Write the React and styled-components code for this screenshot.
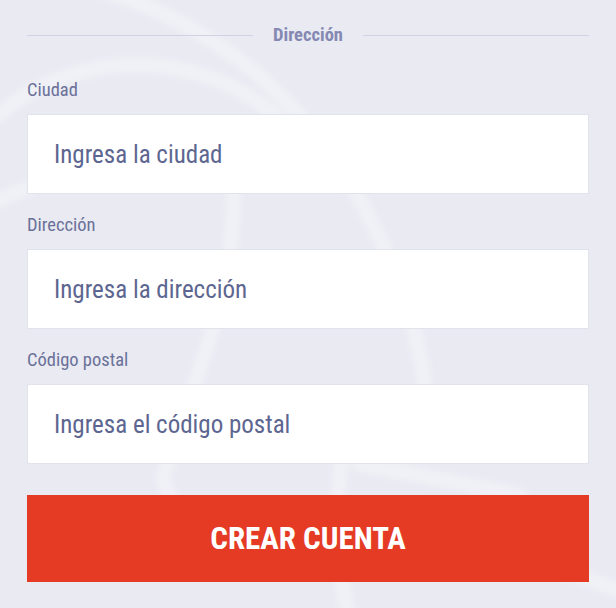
import React from 'react'
import styled, { createGlobalStyle } from 'styled-components'

const GlobalStyle = createGlobalStyle`
  html, body {
    margin: 0;
    padding: 0;
    background: #e9eaf2;
  }
  * { box-sizing: border-box; }
`;

const fields = [
  { label: 'Ciudad', placeholder: 'Ingresa la ciudad' },
  { label: 'Dirección', placeholder: 'Ingresa la dirección' },
  { label: 'Código postal', placeholder: 'Ingresa el código postal' },
];

// trazos suaves del fondo
const Backdrop = () => (
  <StBackdrop viewBox="0 0 616 608" preserveAspectRatio="none">
    <defs>
      <filter id="soft" x="-10%" y="-10%" width="120%" height="120%">
        <feGaussianBlur stdDeviation="3" />
      </filter>
    </defs>
    <g fill="none" stroke="#ffffff" strokeOpacity="0.32" strokeWidth="16" strokeLinecap="round" filter="url(#soft)">
      <path d="M 95 -12 C 200 18, 300 90, 360 200 S 420 360, 430 420" />
      <path d="M -12 125 C 60 50, 200 40, 285 125" />
      <path d="M 232 150 C 242 260, 210 340, 182 420 S 162 470, 174 505" />
      <path d="M 345 440 C 334 500, 334 560, 350 620" />
      <path d="M 360 465 C 420 475, 470 485, 520 495" />
      <path d="M 470 545 C 530 560, 580 575, 630 595" />
      <path d="M -12 205 C 10 195, 20 190, 30 188" />
    </g>
  </StBackdrop>
);

const App = () => {
  return (
    <>
      <GlobalStyle />
      <StPage>
        <Backdrop />
        <StForm>
          <StSection>
            <StLine />
            <StSectionTitle>Dirección</StSectionTitle>
            <StLine />
          </StSection>
          <StFields>
            {fields.map((f, i) => (
              <StField key={i}>
                <StLabel>{f.label}</StLabel>
                <StInput placeholder={f.placeholder} />
              </StField>
            ))}
          </StFields>
          <StButton>CREAR CUENTA</StButton>
        </StForm>
      </StPage>
    </>
  )
}

const StPage = styled.div`
  position: relative;
  width: 616px;
  height: 608px;
  overflow: hidden;
  background: #e9eaf2;
  font-family: 'Roboto', 'Liberation Sans', sans-serif;
  font-stretch: 75%;
`;

const StBackdrop = styled.svg`
  position: absolute;
  inset: 0;
  width: 100%;
  height: 100%;
`;

const StForm = styled.div`
  position: relative;
  display: flex;
  flex-direction: column;
  padding: 25px 27px 0 27px;
`;

const StSection = styled.div`
  display: flex;
  align-items: center;
  gap: 20px;
  height: 20px;
`;

const StLine = styled.div`
  flex: 1;
  height: 1px;
  background-color: #cfd2e2;
`;

const StSectionTitle = styled.div`
  font-size: 18.5px;
  line-height: 20px;
  font-weight: 700;
  color: #8488b2;
`;

const StFields = styled.div`
  display: flex;
  flex-direction: column;
  gap: 21px;
  margin: 35px 0 0 0;
`;

const StField = styled.div`
  display: flex;
  flex-direction: column;
`;

const StLabel = styled.label`
  height: 20px;
  margin: 0 0 14px 0;
  font-size: 18.5px;
  line-height: 20px;
  color: #6b7199;
`;

const StInput = styled.input`
  width: 100%;
  height: 80px;
  padding: 0 26px;
  border: 1px solid #e0e2ec;
  border-radius: 0;
  background-color: #ffffff;
  font-family: inherit;
  font-stretch: 75%;
  font-size: 25px;
  color: #5d6690;
  outline: none;

  &::placeholder {
    color: #5d6690;
    opacity: 1;
  }
`;

const StButton = styled.button`
  width: 100%;
  height: 87px;
  margin: 31px 0 0 0;
  border: none;
  border-radius: 0;
  background-color: #e53b24;
  font-family: inherit;
  font-stretch: 75%;
  font-size: 31px;
  font-weight: 700;
  color: #ffffff;
  cursor: pointer;
`;

export default App
